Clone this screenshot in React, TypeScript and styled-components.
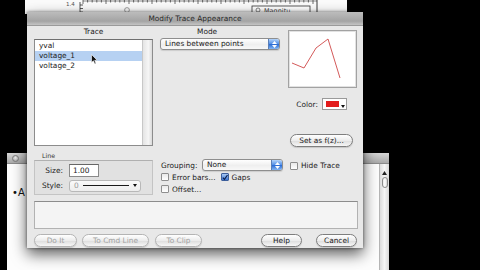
import styled, { createGlobalStyle } from 'styled-components'

const GlobalStyle = createGlobalStyle`
  html, body {
    margin: 0;
    padding: 0;
    background: #000;
  }
  body {
    width: 480px;
    height: 270px;
    overflow: hidden;
    font-family: 'DejaVu Sans', 'Liberation Sans', sans-serif;
    font-size: 7.4px;
    color: #1a1a1a;
  }
`

const Desktop = styled.div`
  position: relative;
  width: 480px;
  height: 270px;
  background: #000;
  overflow: hidden;
`

/* background windows */

const GraphWindow = styled.div`
  position: absolute;
  left: 25px;
  top: 0;
  width: 322px;
  height: 14px;
  background: #fbfbfb;
`

const BackWindow = styled.div`
  position: absolute;
  left: 7px;
  top: 153px;
  width: 382px;
  height: 130px;
  display: flex;
  flex-direction: column;
  background: #fdfdfd;
`

const BackTitle = styled.div`
  height: 10px;
  display: flex;
  align-items: center;
  padding-left: 5px;
  background: linear-gradient(#d6d6d6, #a9a9a9);
  border-bottom: 1px solid #8a8a8a;
`

const Light = styled.span`
  width: 7px;
  height: 7px;
  border-radius: 50%;
  background: radial-gradient(circle at 50% 35%, #f2f2f2, #9a9a9a);
  border: 1px solid #7d7d7d;
  box-sizing: border-box;
`

const BackContent = styled.div`
  flex: 1;
  display: flex;
`

const BackText = styled.div`
  flex: 1;
  padding: 23px 0 0 5px;
  font-size: 10px;
  color: #111;
`

const ScrollBar = styled.div`
  width: 9px;
  display: flex;
  flex-direction: column;
  align-items: center;
  padding-top: 7px;
  gap: 2px;
  background: linear-gradient(90deg, #dcdcdc, #f6f6f6, #d8d8d8);
  border-left: 1px solid #b5b5b5;
`

const ScrollThumb = styled.div`
  width: 6px;
  height: 11px;
  border: 1px solid #8c8c8c;
  border-radius: 3px;
  box-sizing: border-box;
  background: linear-gradient(90deg, #e8e8e8, #ffffff, #d0d0d0);
`

/* dialog */

const Dialog = styled.div`
  position: absolute;
  left: 27px;
  top: 12px;
  width: 336px;
  height: 236px;
  display: flex;
  flex-direction: column;
  background: #e8e8e8;
  box-shadow: 0 6px 14px rgba(0, 0, 0, 0.65), 0 0 3px rgba(0, 0, 0, 0.5);
`

const TitleBar = styled.div`
  height: 13px;
  display: flex;
  align-items: center;
  justify-content: center;
  background: linear-gradient(#bcbcbc, #a4a4a4 70%, #c4c4c4);
  border-bottom: 1px solid #9a9a9a;
  color: #2a2a2a;
`

const Body = styled.div`
  flex: 1;
  display: flex;
  flex-direction: column;
  padding: 0 5px 0 7px;
`

const TopSection = styled.div`
  display: flex;
  height: 120px;
`

const Column = styled.div<{ $w: number; $ml?: number }>`
  width: ${p => p.$w}px;
  margin-left: ${p => p.$ml ?? 0}px;
  display: flex;
  flex-direction: column;
`

const ColLabel = styled.div<{ $pl?: number }>`
  height: 12px;
  line-height: 12px;
  padding-left: ${p => p.$pl ?? 0}px;
  text-align: ${p => (p.$pl ? 'left' : 'center')};
`

const ListBox = styled.div`
  position: relative;
  margin-top: 1px;
  height: 108px;
  display: flex;
  box-sizing: border-box;
  border: 1px solid #8c8c8c;
  border-top-color: #6f6f6f;
  background: #fff;
`

const ListItems = styled.div`
  flex: 1;
  padding-top: 1px;
  display: flex;
  flex-direction: column;
`

const ListItem = styled.div<{ $selected?: boolean }>`
  height: 10px;
  line-height: 10px;
  padding-left: 4px;
  background: ${p => (p.$selected ? '#b6d1f2' : 'transparent')};
`

const ListTrack = styled.div`
  width: 9px;
  background: linear-gradient(90deg, #e4e4e4, #f6f6f6 60%, #dadada);
  border-left: 1px solid #c8c8c8;
`

const CursorMark = styled.svg`
  position: absolute;
  left: 56px;
  top: 14px;
`

const Popup = styled.div<{ $w: number }>`
  width: ${p => p.$w}px;
  height: 12px;
  box-sizing: border-box;
  display: flex;
  align-items: stretch;
  border: 1px solid #8e8e8e;
  border-radius: 3px;
  background: linear-gradient(#ffffff, #efefef 55%, #f8f8f8);
  box-shadow: 0 1px 1px rgba(0, 0, 0, 0.12);
  overflow: hidden;
`

const PopupText = styled.span`
  flex: 1;
  padding-left: 4px;
  line-height: 10px;
  white-space: nowrap;
`

const Stepper = styled.span`
  width: 10px;
  display: flex;
  flex-direction: column;
  align-items: center;
  justify-content: center;
  gap: 1px;
  background: linear-gradient(#b4d4fa, #4f8de6 50%, #2e6fd6 55%, #84b6f3);
  border-left: 1px solid #5a7fb8;
`

const PreviewBox = styled.div`
  margin-top: 4px;
  height: 58px;
  box-sizing: border-box;
  border: 1px solid #a2a2a2;
  box-shadow: inset 0 0 0 1px #e2e2e2;
  background: #fff;
  display: flex;
`

const ColorRow = styled.div`
  margin-top: 10px;
  display: flex;
  align-items: center;
  justify-content: flex-end;
  gap: 4px;
  padding-right: 10px;
  height: 12px;
`

const Swatch = styled.span`
  position: relative;
  width: 25px;
  height: 12px;
  box-sizing: border-box;
  padding: 2px 7px 2px 3px;
  display: flex;
  border: 1px solid #9a9a9a;
  background: #fff;
`

const SwatchFill = styled.span`
  flex: 1;
  background: #e21c1c;
`

const SwatchArrow = styled.svg`
  position: absolute;
  right: 1px;
  bottom: 1px;
`

const PillButton = styled.div<{ $w: number; $disabled?: boolean }>`
  width: ${p => p.$w}px;
  height: 13px;
  box-sizing: border-box;
  display: flex;
  align-items: center;
  justify-content: center;
  border: 1px solid ${p => (p.$disabled ? '#b4b4b4' : '#7e7e7e')};
  border-radius: 7px;
  background: linear-gradient(#ffffff, #ececec 50%, #dedede 55%, #f7f7f7);
  box-shadow: 0 1px 1px rgba(0, 0, 0, 0.15);
  color: ${p => (p.$disabled ? '#a2a2a2' : '#1a1a1a')};
  white-space: nowrap;
`

const SetButtonRow = styled.div`
  margin-top: 24px;
  padding-left: 2px;
  display: flex;
`

const MiddleSection = styled.div`
  display: flex;
  height: 50px;
`

const GroupLabel = styled.div`
  height: 14px;
  display: flex;
  align-items: flex-end;
  padding: 0 0 1px 8px;
  box-sizing: border-box;
  font-size: 6.3px;
  color: #333;
`

const GroupBox = styled.div`
  height: 35px;
  box-sizing: border-box;
  border: 1px solid #c4c4c4;
  border-top-color: #b0b0b0;
  background: #e1e1e1;
  display: flex;
  flex-direction: column;
  padding-top: 3px;
  gap: 2px;
`

const FieldRow = styled.div`
  display: flex;
  align-items: center;
  height: 13px;
`

const FieldLabel = styled.span`
  width: 28px;
  text-align: right;
  padding-right: 6px;
`

const TextField = styled.span`
  width: 30px;
  height: 13px;
  box-sizing: border-box;
  border: 1px solid #8a8a8a;
  border-top-color: #666;
  background: #fff;
  padding-left: 3px;
  line-height: 11px;
`

const StylePopup = styled.span`
  width: 72px;
  height: 12px;
  box-sizing: border-box;
  display: flex;
  align-items: center;
  gap: 4px;
  padding: 0 3px 0 4px;
  border: 1px solid #b8b8b8;
  border-radius: 3px;
  background: linear-gradient(#fafafa, #ededed);
  color: #9a9a9a;
`

const StyleLine = styled.span`
  flex: 1;
  height: 1px;
  background: #1a1a1a;
`

const OptionsCol = styled.div`
  margin-left: 8px;
  padding-top: 13px;
  display: flex;
  flex-direction: column;
`

const OptionRow = styled.div<{ $gap?: number }>`
  display: flex;
  align-items: center;
  height: 12px;
  gap: ${p => p.$gap ?? 0}px;
`

const GroupingLabel = styled.span`
  width: 41px;
`

const Check = styled.label`
  display: flex;
  align-items: center;
  gap: 3px;
  white-space: nowrap;
`

const Box = styled.span<{ $on?: boolean }>`
  width: 8px;
  height: 8px;
  box-sizing: border-box;
  display: flex;
  align-items: center;
  justify-content: center;
  border: 1px solid ${p => (p.$on ? '#3d5f9c' : '#8e8e8e')};
  border-radius: 1px;
  background: ${p => (p.$on ? 'linear-gradient(#a8c9f4, #3a76d6)' : 'linear-gradient(#e9e9e9, #ffffff)')};
`

const HideCol = styled.div`
  margin-left: 7px;
  padding-top: 15px;
`

const CommandArea = styled.div`
  margin-top: 5px;
  height: 28px;
  box-sizing: border-box;
  border: 1px solid #b2b2b2;
  border-top-color: #8c8c8c;
  background: #f4f4f4;
`

const ButtonRow = styled.div`
  margin-top: 5px;
  display: flex;
  align-items: center;
`

const Spacer = styled.div<{ $w?: number }>`
  width: ${p => (p.$w ? `${p.$w}px` : 'auto')};
  flex: ${p => (p.$w ? 'none' : 1)};
`

const StepArrows = () => (
  <>
    <svg width="5" height="3" viewBox="0 0 5 3">
      <path d="M0 3 L2.5 0 L5 3 Z" fill="#fff" />
    </svg>
    <svg width="5" height="3" viewBox="0 0 5 3">
      <path d="M0 0 L2.5 3 L5 0 Z" fill="#fff" />
    </svg>
  </>
)

const Axis = () => {
  const ticks = []
  for (let x = 58; x < 292; x += 4.6) ticks.push(x)
  return (
    <svg width="322" height="14" viewBox="0 0 322 14">
      <line x1="58" y1="1" x2="292" y2="1" stroke="#444" strokeWidth="0.6" />
      {ticks.map((x, i) => (
        <line key={i} x1={x} y1="0" x2={x} y2={i % 5 === 0 ? 4 : 2.5} stroke="#333" strokeWidth="0.7" />
      ))}
      <text x="41" y="6" fontSize="5.5" fill="#555" fontFamily="DejaVu Sans">1.4</text>
      <path d="M55 2 V12 M55 5 H58 M55 8.5 H58 M55 12 H58" stroke="#333" strokeWidth="0.8" fill="none" />
      <circle cx="102" cy="10" r="2.4" fill="none" stroke="#888" strokeWidth="0.8" />
      <rect x="227" y="6" width="58" height="8" fill="#fff" stroke="#333" strokeWidth="0.8" />
      <circle cx="233" cy="10" r="2" fill="none" stroke="#555" strokeWidth="0.7" />
      <text x="239" y="12.5" fontSize="6.5" fill="#444" fontFamily="DejaVu Sans">Magnitu</text>
      <line x1="292" y1="0" x2="292" y2="14" stroke="#222" strokeWidth="0.9" />
    </svg>
  )
}

export default function App() {
  return (
    <>
      <GlobalStyle />
      <Desktop>
        <GraphWindow>
          <Axis />
        </GraphWindow>

        <BackWindow>
          <BackTitle>
            <Light />
          </BackTitle>
          <BackContent>
            <BackText>•A</BackText>
            <ScrollBar>
              <svg width="5" height="4" viewBox="0 0 5 4">
                <path d="M0 4 L2.5 0 L5 4 Z" fill="#222" />
              </svg>
              <ScrollThumb />
            </ScrollBar>
          </BackContent>
        </BackWindow>

        <Dialog>
          <TitleBar>Modify Trace Appearance</TitleBar>
          <Body>
            <TopSection>
              <Column $w={119}>
                <ColLabel>Trace</ColLabel>
                <ListBox>
                  <ListItems>
                    <ListItem>yval</ListItem>
                    <ListItem $selected>voltage_1</ListItem>
                    <ListItem>voltage_2</ListItem>
                  </ListItems>
                  <ListTrack />
                  <CursorMark width="7" height="11" viewBox="0 0 7 11">
                    <path d="M0.5 0.5 L0.5 8.5 L2.4 6.8 L3.8 10 L5 9.4 L3.7 6.3 L6.2 6.2 Z" fill="#111" stroke="#fff" strokeWidth="0.6" />
                  </CursorMark>
                </ListBox>
              </Column>

              <Column $w={120} $ml={7}>
                <ColLabel $pl={37}>Mode</ColLabel>
                <Popup $w={120}>
                  <PopupText>Lines between points</PopupText>
                  <Stepper>
                    <StepArrows />
                  </Stepper>
                </Popup>
              </Column>

              <Column $w={69} $ml={8}>
                <PreviewBox>
                  <svg width="67" height="56" viewBox="0 0 67 56">
                    <polyline
                      points="3,32 15,37 27,17 39,8 51,47"
                      fill="none"
                      stroke="#d45a5a"
                      strokeWidth="1"
                    />
                  </svg>
                </PreviewBox>
                <ColorRow>
                  <span>Color:</span>
                  <Swatch>
                    <SwatchFill />
                    <SwatchArrow width="4" height="3" viewBox="0 0 4 3">
                      <path d="M0 0 L2 3 L4 0 Z" fill="#111" />
                    </SwatchArrow>
                  </Swatch>
                </ColorRow>
                <SetButtonRow>
                  <PillButton $w={63}>Set as f(z)...</PillButton>
                </SetButtonRow>
              </Column>
            </TopSection>

            <MiddleSection>
              <Column $w={119}>
                <GroupLabel>Line</GroupLabel>
                <GroupBox>
                  <FieldRow>
                    <FieldLabel>Size:</FieldLabel>
                    <TextField>1.00</TextField>
                  </FieldRow>
                  <FieldRow>
                    <FieldLabel>Style:</FieldLabel>
                    <StylePopup>
                      <span>0</span>
                      <StyleLine />
                      <svg width="4" height="3" viewBox="0 0 4 3">
                        <path d="M0 0 L2 3 L4 0 Z" fill="#111" />
                      </svg>
                    </StylePopup>
                  </FieldRow>
                </GroupBox>
              </Column>

              <OptionsCol>
                <OptionRow>
                  <GroupingLabel>Grouping:</GroupingLabel>
                  <Popup $w={81}>
                    <PopupText>None</PopupText>
                    <Stepper>
                      <StepArrows />
                    </Stepper>
                  </Popup>
                </OptionRow>
                <OptionRow $gap={5}>
                  <Check>
                    <Box />
                    Error bars...
                  </Check>
                  <Check>
                    <Box $on>
                      <svg width="7" height="7" viewBox="0 0 7 7">
                        <path d="M1 3.6 L2.9 5.6 L6.4 0.6" fill="none" stroke="#0d1f4a" strokeWidth="1.4" />
                      </svg>
                    </Box>
                    Gaps
                  </Check>
                </OptionRow>
                <OptionRow>
                  <Check>
                    <Box />
                    Offset...
                  </Check>
                </OptionRow>
              </OptionsCol>

              <HideCol>
                <Check>
                  <Box />
                  Hide Trace
                </Check>
              </HideCol>
            </MiddleSection>

            <CommandArea />

            <ButtonRow>
              <PillButton $w={43} $disabled>Do It</PillButton>
              <Spacer $w={5} />
              <PillButton $w={67} $disabled>To Cmd Line</PillButton>
              <Spacer $w={6} />
              <PillButton $w={47} $disabled>To Clip</PillButton>
              <Spacer />
              <PillButton $w={41}>Help</PillButton>
              <Spacer $w={14} />
              <PillButton $w={41}>Cancel</PillButton>
              <Spacer $w={1} />
            </ButtonRow>
          </Body>
        </Dialog>
      </Desktop>
    </>
  )
}
